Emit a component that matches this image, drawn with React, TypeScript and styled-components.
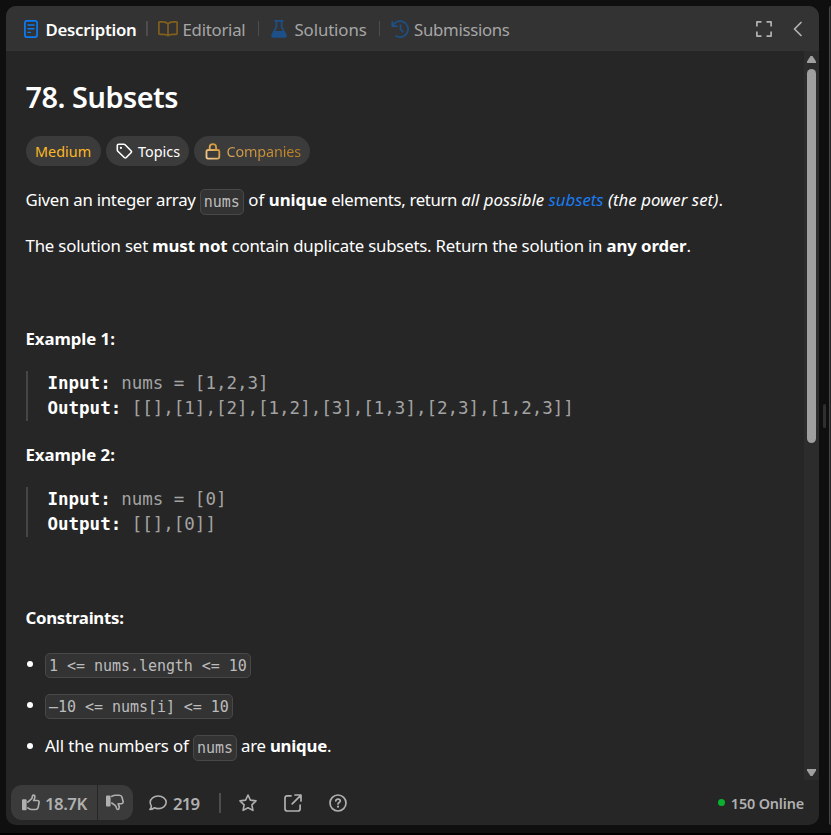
import React from 'react';
import styled, { createGlobalStyle } from 'styled-components';

const Global = createGlobalStyle`
  * { box-sizing: border-box; }
  body {
    margin: 0;
    background: #0f0f0f;
    color: #fff;
    font-family: "Noto Sans", "Open Sans", sans-serif;
    overflow: hidden;
  }
  svg { display: block; flex: none; }
`;

const Page = styled.div`
  display: flex;
  width: 831px;
  height: 835px;
  padding: 6px 0 10px 6px;
  box-shadow: inset 0 -2px 0 #000;
`;

const Panel = styled.section`
  display: flex;
  flex-direction: column;
  width: 813px;
  height: 819px;
  border-radius: 10px;
  overflow: hidden;
  background: #262626;
`;

const Header = styled.header`
  display: flex;
  align-items: center;
  flex: none;
  height: 45px;
  padding: 0 15px 0 17px;
  background: #333;
`;

const Tab = styled.div<{ $active?: boolean; $gap: number; $width: number; $ls?: number; $left?: number }>`
  display: flex;
  align-items: center;
  gap: ${(p) => p.$gap}px;
  width: ${(p) => p.$width}px;
  height: 28px;
  padding-left: ${(p) => p.$left ?? 0}px;
  font-size: 16.8px;
  white-space: nowrap;
  letter-spacing: ${(p) => p.$ls ?? 0}px;
  font-weight: ${(p) => (p.$active ? 600 : 400)};
  color: ${(p) => (p.$active ? '#fff' : '#a6a6a6')};
`;

const Label = styled.span`
  padding-top: 2px;
  line-height: 28px;
`;

const Divider = styled.span<{ $h: number; $w?: number }>`
  flex: none;
  width: ${(p) => p.$w ?? 1}px;
  height: ${(p) => p.$h}px;
  background: #4d4d4d;
`;

const HeaderActions = styled.div`
  display: flex;
  align-items: center;
  gap: 20px;
  margin-left: auto;
  color: #b3b3b3;
`;

const Main = styled.div`
  display: flex;
  flex: none;
  height: 729px;
`;

const Content = styled.article`
  flex: 1;
  padding: 27px 0 0 19.5px;
  white-space: nowrap;
`;

const Title = styled.h1`
  margin: 0;
  font-size: 28.8px;
  font-weight: 600;
  line-height: 37px;
  letter-spacing: -0.45px;
`;

const Pills = styled.div`
  display: flex;
  gap: 5px;
  margin: 21px 0 20px 0.5px;
`;

const Pill = styled.span<{ $w: number; $gap?: number; $pad: number }>`
  display: flex;
  align-items: center;
  gap: ${(p) => p.$gap ?? 0}px;
  width: ${(p) => p.$w}px;
  height: 30px;
  padding-left: ${(p) => p.$pad}px;
  border-radius: 15px;
  background: #3b3b3b;
  font-size: 14.4px;
  line-height: 28px;
`;

const Level = styled(Label)`
  color: #fdb924;
`;

const Premium = styled(Label)`
  letter-spacing: -0.15px;
  color: transparent;
  background: linear-gradient(90deg, #d6a256, #bd7f1f);
  background-clip: text;
  -webkit-background-clip: text;
`;

const Paragraph = styled.p<{ $top?: number }>`
  margin: ${(p) => p.$top ?? 0}px 0 0;
  font-size: 16.8px;
  line-height: 28px;
  white-space: pre;
`;

const Run = styled.span<{ $ls: number }>`
  letter-spacing: ${(p) => p.$ls}px;
`;

const Strong = styled.strong<{ $ls?: number }>`
  font-weight: 700;
  letter-spacing: ${(p) => p.$ls ?? 0}px;
`;

const Link = styled.a`
  color: #1a7bf0;
`;

const Code = styled.code`
  padding: 2.75px 3px;
  border: 1px solid #484848;
  border-radius: 5px;
  background: #333;
  color: #bcbcbc;
  font-family: "DejaVu Sans Mono", monospace;
  font-size: 15px;
  letter-spacing: -0.04px;
  line-height: 1;
  vertical-align: -1px;
`;

const Sample = styled.pre<{ $top: number }>`
  margin: ${(p) => p.$top}px 0 0 0.5px;
  padding-left: 19.5px;
  border-left: 2px solid #464646;
  color: #a3a3a3;
  font-family: "DejaVu Sans Mono", monospace;
  font-size: 17.5px;
  letter-spacing: -0.01px;
  line-height: 25px;

  strong { color: #fff; }
`;

const List = styled.ul`
  display: flex;
  flex-direction: column;
  gap: 13.3px;
  margin: 17.3px 0 0;
  padding: 0;
  list-style: none;
`;

const Item = styled.li`
  display: flex;
  align-items: center;
  gap: 12.5px;
  height: 28px;
  padding-left: 1px;

  &::before {
    content: "";
    width: 6px;
    height: 6px;
    margin-top: 1px;
    border-radius: 50%;
    background: #fff;
  }
`;

const Scrollbar = styled.div`
  display: flex;
  flex-direction: column;
  align-items: center;
  width: 15px;
  padding: 5px 0 4px;
  background: #2c2c2c;
  color: #a0a0a0;
`;

const Thumb = styled.div`
  width: 9px;
  height: 374px;
  margin: 6px 0 auto;
  border-radius: 5px;
  background: #9f9f9f;
`;

const Footer = styled.footer`
  display: flex;
  align-items: center;
  flex: 1;
  padding: 2px 15px 2px 5px;
  color: #b0b0b0;
  font-size: 16.8px;
  font-weight: 600;
`;

const Votes = styled.div`
  display: flex;
  gap: 1px;
  height: 35px;
  border-radius: 11px;
  overflow: hidden;
`;

const Vote = styled.div<{ $w: number; $pad: number }>`
  display: flex;
  align-items: center;
  gap: 5px;
  width: ${(p) => p.$w}px;
  padding-left: ${(p) => p.$pad}px;
  background: #3b3b3b;
`;

const Comments = styled.div`
  display: flex;
  align-items: center;
  gap: 6px;
  width: 70px;
  margin: 0 0 0 16px;
`;

const Count = styled(Label)<{ $ls: number }>`
  letter-spacing: ${(p) => p.$ls}px;
`;

const FooterIcons = styled.div`
  display: flex;
  gap: 27px;
  margin-left: 18px;
`;

const Online = styled.div`
  display: flex;
  align-items: center;
  gap: 6px;
  margin-left: auto;
  font-size: 14.4px;
  letter-spacing: -0.15px;

  &::before {
    content: "";
    width: 7px;
    height: 7px;
    border-radius: 50%;
    background: #0bb02e;
  }
`;

const Gutter = styled.div`
  display: flex;
  align-items: center;
  justify-content: center;
  width: 10px;
  height: 819px;

  &::before {
    content: "";
    width: 3px;
    height: 24px;
    border-radius: 2px;
    background: #2f2f2f;
  }
`;

const NextPanel = styled.div`
  width: 2px;
  height: 819px;
  border-left: 1px solid #454545;
  border-radius: 8px 0 0 8px;
  background: #262626;
`;

const line = {
  fill: 'none',
  stroke: 'currentColor',
  strokeWidth: 1.7,
  strokeLinecap: 'round' as const,
  strokeLinejoin: 'round' as const,
};

const DocIcon = () => (
  <svg width="16" height="18" viewBox="0 0 16 18" {...line} stroke="#0a7cf5">
    <rect x="1.9" y="0.9" width="12.2" height="16.2" rx="2" />
    <path d="M5 5h6M5 8.8h6M5 12.4h2.4" strokeWidth="1.4" />
  </svg>
);

const BookIcon = () => (
  <svg width="20" height="16" viewBox="0 0 20 16" {...line} stroke="#80601d">
    <path d="M10 2.8C8.6 1.3 6.8.9 5 .9H2Q.9.9.9 2v10.2q0 1.1 1.1 1.1h3.5c2 0 3.5.4 4.5 1.4 1-1 2.500-1.400 4.500-1.400H18q1.100 0 1.100-1.100V2Q19.100.9 18 .9h-3C13.200.9 11.400 1.300 10 2.800zM10 2.800v11.600" />
  </svg>
);

const FlaskIcon = () => (
  <svg width="16" height="18" viewBox="0 0 16 18" fill="#1d5089">
    <path d="M4 0h8a.8.8 0 0 1 0 1.700h-.5v5.100l4 7.700c.8 1.600-.1 3.200-1.800 3.200H2.300c-1.700 0-2.600-1.600-1.800-3.200l4-7.700V1.700H4A.8.8 0 0 1 4 0zm2.200 1.700v5.500L4.200 11h7.600l-2-3.800V1.700z" fillRule="evenodd" />
  </svg>
);

const HistoryIcon = () => (
  <svg width="18" height="18" viewBox="0 0 18 18" {...line} stroke="#1d5089">
    <path d="M1.300 1.800v4.400h4.400M1.800 5.800A8 8 0 1 1 4.900 15.900" />
    <path d="M9.500 5v4.300l2.200 2.500" />
  </svg>
);

const ExpandIcon = () => (
  <svg width="16" height="16" viewBox="0 0 16 16" {...line} strokeLinecap="butt">
    <path d="M.9 5.500V.9H5.500M10.500.9h4.600v4.600M15.100 10.500v4.600h-4.600M5.500 15.100H.9v-4.600" />
  </svg>
);

const ChevronIcon = () => (
  <svg width="12" height="16" viewBox="0 0 12 16" {...line}>
    <path d="M9 1.500 2.500 8 9 14.500" />
  </svg>
);

const TagIcon = () => (
  <svg width="17" height="17" viewBox="0 0 17 17" {...line} strokeWidth="1.600">
    <path d="M1.300 2.600q0-1.300 1.300-1.300h5.200q.8 0 1.300.5l5.900 5.900q1 1 0 2l-4.700 4.800q-1 1-2 0L1.800 8.200Q1.300 7.700 1.300 7z" />
    <circle cx="4.900" cy="4.900" r="1.100" fill="currentColor" stroke="none" />
  </svg>
);

const LockIcon = () => (
  <svg width="16" height="17" viewBox="0 0 16 17" {...line} stroke="url(#gold)" strokeWidth="1.800">
    <defs>
      <linearGradient id="gold" x1="0" y1="1" x2="1" y2="0">
        <stop offset="0" stopColor="#f6cf94" />
        <stop offset="1" stopColor="#c88a26" />
      </linearGradient>
    </defs>
    <path d="M4.700 7V4.300a3.200 3.200 0 0 1 6.400 0V7M3 7h9.800q1.500 0 1.500 1.500v5.600q0 1.500-1.500 1.500H3q-1.500 0-1.500-1.500V8.500Q1.500 7 3 7z" />
  </svg>
);

const ThumbUpIcon = () => (
  <svg width="18" height="17" viewBox="0 0 18 17" {...line} strokeWidth="1.600">
    <rect x="0" y="5.300" width="4.600" height="11" rx="1" fill="currentColor" stroke="none" />
    <path d="M5.800 8.200 9.500 4.900Q10.200 4.200 10.300 2.600c.1-2 2.600-2.100 2.600.1 0 1.700-.7 2.700-1.300 3.800h3.700q2 .1 1.800 2l-.9 4.600q-.4 2.400-2.600 2.400H9.300q-1.600 0-3.500-1.600" />
  </svg>
);

const ThumbDownIcon = () => (
  <svg width="18" height="17" viewBox="0 0 18 17" {...line} strokeWidth="1.600">
    <rect x="0" y="1.500" width="4.600" height="11" rx="1" fill="currentColor" stroke="none" />
    <path d="M5.800 2.300Q8 1.200 9.500 1.200h3.800q2.200 0 2.700 2l1.100 4.300q.3 2-1.700 2.300h-3.200c.6 1.200 1 2.200 1 3.700 0 2.500-2.500 2.500-2.800.5q-.2-1.600-1-2.300L5.800 9" />
  </svg>
);

const CommentIcon = () => (
  <svg width="18" height="16" viewBox="0 0 18 16" {...line} strokeWidth="1.600">
    <path d="M9.200 1c4.400 0 8 2.700 8 6.300s-3.600 6.300-8 6.300c-1.500 0-2.800-.3-4-.8q-1.900 1.700-4.300 1.700 1.400-1.600 1.500-3.400Q1.200 9.400 1.200 7.300C1.200 3.700 4.800 1 9.200 1z" />
  </svg>
);

const StarIcon = () => (
  <svg width="18" height="18" viewBox="0 0 18 18" {...line} strokeWidth="1.600">
    <path d="m9 1 2.400 5.100 5.600.8-4.100 3.900 1 5.600L9 13.700l-4.900 2.700 1-5.600L1 6.900l5.600-.8z" />
  </svg>
);

const ShareIcon = () => (
  <svg width="18" height="18" viewBox="0 0 18 18" {...line}>
    <path d="M7 1.900H3.300Q1 1.900 1 4.200v10.500Q1 17 3.300 17h10.500q2.300 0 2.300-2.300V11M11 1h6v6M16.700 1.300 8.200 9.800" />
  </svg>
);

const HelpIcon = () => (
  <svg width="18" height="18" viewBox="0 0 18 18" {...line}>
    <circle cx="9" cy="9" r="8" />
    <path d="M6.800 7Q6.900 5.200 9 5.200q2.300 0 2.300 1.900c0 1.300-2.300 1.500-2.300 2.900" />
    <circle cx="9" cy="12.700" r="1.100" fill="currentColor" stroke="none" />
  </svg>
);

const ArrowIcon = ({ down }: { down?: boolean }) => (
  <svg width="9" height="7" viewBox="0 0 9 7" fill="currentColor">
    <path d={down ? 'M0 0h9v1.500L5.500 7h-2L0 1.500z' : 'M0 7h9V5.500L5.500 0h-2L0 5.500z'} />
  </svg>
);

export default function App() {
  return (
    <>
      <Global />
      <Page>
        <Panel>
          <Header>
            <Tab $active $gap={6.5} $width={123} $ls={-0.27}><DocIcon /><Label>Description</Label></Tab>
            <Divider $h={15} $w={2} />
            <Tab $left={10} $gap={4.5} $width={110} $ls={-0.25}><BookIcon /><Label>Editorial</Label></Tab>
            <Divider $h={15} />
            <Tab $left={12} $gap={7.5} $width={119.5} $ls={-0.1}><FlaskIcon /><Label>Solutions</Label></Tab>
            <Divider $h={15} />
            <Tab $left={11.5} $gap={5} $width={134} $ls={-0.3}><HistoryIcon /><Label>Submissions</Label></Tab>
            <HeaderActions><ExpandIcon /><ChevronIcon /></HeaderActions>
          </Header>
          <Main>
            <Content>
              <Title>78. Subsets</Title>
              <Pills>
                <Pill $w={75} $pad={9}><Level>Medium</Level></Pill>
                <Pill $w={83} $pad={9.5} $gap={5.5}><TagIcon /><Label>Topics</Label></Pill>
                <Pill $w={116} $pad={11} $gap={5.5}><LockIcon /><Premium>Companies</Premium></Pill>
              </Pills>
              <Paragraph>
                <Run $ls={-0.25}>{'Given an integer array '}</Run>
                <Code>nums</Code>
                <Run $ls={0.1}>{' of '}</Run>
                <Strong>unique</Strong>
                <Run $ls={-0.35}>{' elements, return '}</Run>
                <em>{'all possible '}<Link>subsets</Link><Run $ls={0.05}>{' (the power set)'}</Run></em>.
              </Paragraph>
              <Paragraph $top={18}>
                <Run $ls={-0.17}>{'The solution set '}</Run>
                <Strong $ls={-0.1}>must not</Strong>
                <Run $ls={-0.2}>{' contain duplicate subsets. Return the solution in '}</Run>
                <Strong $ls={-0.08}>any order</Strong>.
              </Paragraph>
              <Paragraph $top={65}><Strong $ls={-0.05}>Example 1:</Strong></Paragraph>
              <Sample $top={18}>
                <strong>Input:</strong>{' nums = [1,2,3]\n'}
                <strong>Output:</strong>{' [[],[1],[2],[1,2],[3],[1,3],[2,3],[1,2,3]]'}
              </Sample>
              <Paragraph $top={20}><Strong $ls={-0.05}>Example 2:</Strong></Paragraph>
              <Sample $top={18}>
                <strong>Input:</strong>{' nums = [0]\n'}
                <strong>Output:</strong>{' [[],[0]]'}
              </Sample>
              <Paragraph $top={67}><Strong $ls={-0.28}>Constraints:</Strong></Paragraph>
              <List>
                <Item><Paragraph><Code>{'1 <= nums.length <= 10'}</Code></Paragraph></Item>
                <Item><Paragraph><Code>{'–10 <= nums[i] <= 10'}</Code></Paragraph></Item>
                <Item>
                  <Paragraph>
                    <Run $ls={-0.1}>{'All the numbers of '}</Run>
                    <Code>nums</Code>
                    <Run $ls={-0.25}>{' are '}</Run>
                    <Strong $ls={-0.2}>unique</Strong>.
                  </Paragraph>
                </Item>
              </List>
            </Content>
            <Scrollbar><ArrowIcon /><Thumb /><ArrowIcon down /></Scrollbar>
          </Main>
          <Footer>
            <Votes>
              <Vote $w={86} $pad={11}><ThumbUpIcon /><Count $ls={-0.5}>18.7K</Count></Vote>
              <Vote $w={35} $pad={8}><ThumbDownIcon /></Vote>
            </Votes>
            <Comments><CommentIcon /><Count $ls={-0.8}>219</Count></Comments>
            <Divider $h={20} $w={2} />
            <FooterIcons><StarIcon /><ShareIcon /><HelpIcon /></FooterIcons>
            <Online><Label>150 Online</Label></Online>
          </Footer>
        </Panel>
        <Gutter />
        <NextPanel />
      </Page>
    </>
  );
}
